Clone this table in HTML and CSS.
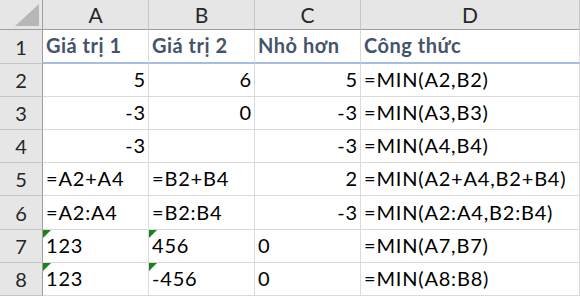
FILE: index.html
```html
<!DOCTYPE html>
<html>
<head>
<meta charset="utf-8">
<link rel="stylesheet" href="styles.css">
</head>
<body>
<div class="sheet">
  <div class="ch corner"><svg class="corner-tri" width="25" height="23" viewBox="0 0 25 23"><polygon points="0,22 24,22 24,0" fill="#b7b7b7"/></svg></div>
  <div class="ch">A</div>
  <div class="ch">B</div>
  <div class="ch">C</div>
  <div class="ch">D</div>

  <div class="rh">1</div>
  <div class="c hd">Giá trị 1</div>
  <div class="c hd">Giá trị 2</div>
  <div class="c hd">Nhỏ hơn</div>
  <div class="c hd">Công thức</div>

  <div class="rh">2</div>
  <div class="c r">5</div>
  <div class="c r">6</div>
  <div class="c r">5</div>
  <div class="c">=MIN(A2,B2)</div>

  <div class="rh">3</div>
  <div class="c r">-3</div>
  <div class="c r">0</div>
  <div class="c r">-3</div>
  <div class="c">=MIN(A3,B3)</div>

  <div class="rh">4</div>
  <div class="c r">-3</div>
  <div class="c r"></div>
  <div class="c r">-3</div>
  <div class="c">=MIN(A4,B4)</div>

  <div class="rh">5</div>
  <div class="c">=A2+A4</div>
  <div class="c">=B2+B4</div>
  <div class="c r">2</div>
  <div class="c">=MIN(A2+A4,B2+B4)</div>

  <div class="rh">6</div>
  <div class="c">=A2:A4</div>
  <div class="c">=B2:B4</div>
  <div class="c r">-3</div>
  <div class="c">=MIN(A2:A4,B2:B4)</div>

  <div class="rh">7</div>
  <div class="c flag">123</div>
  <div class="c flag">456</div>
  <div class="c">0</div>
  <div class="c">=MIN(A7,B7)</div>

  <div class="rh">8</div>
  <div class="c flag">123</div>
  <div class="c flag">-456</div>
  <div class="c">0</div>
  <div class="c">=MIN(A8:B8)</div>
</div>
</body>
</html>
```

FILE: styles.css
```css
html, body {
  margin: 0;
  padding: 0;
  background: #ffffff;
}

.sheet {
  display: grid;
  grid-template-columns: 43px 106px 106px 106px 219px;
  grid-template-rows: 30px 34px 33px 33px 33px 33px 34px 33px 33px;
  width: 580px;
  font-family: Lato, "Liberation Sans", sans-serif;
  font-size: 20px;
  letter-spacing: 0.8px;
  color: #000;
}

.sheet > div {
  box-sizing: border-box;
  display: flex;
  align-items: flex-end;
  padding: 0 2px 5px 3px;
  border-right: 1px solid #dadada;
  border-bottom: 1px solid #dadada;
  white-space: nowrap;
  overflow: visible;
  position: relative;
}

.sheet > .ch {
  background: #e6e6e6;
  justify-content: center;
  align-items: center;
  padding: 0;
  border-right: 1px solid #c6c6c6;
  border-bottom: 1px solid #9e9e9e;
  color: #262626;
  font-size: 21px;
  letter-spacing: 0;
}

.sheet > .corner {
  border-right: 1px solid #9e9e9e;
}

.corner-tri {
  position: absolute;
  left: 15px;
  top: 4px;
}

.sheet > .rh {
  background: #e6e6e6;
  justify-content: center;
  padding: 0 0 4px 0;
  border-right: 1px solid #9e9e9e;
  border-bottom: 1px solid #c6c6c6;
  color: #262626;
  letter-spacing: 0;
}

.sheet > .hd {
  font-weight: bold;
  color: #44546a;
  letter-spacing: 0.5px;
  border-bottom: 2px solid #a6bce2;
}

.sheet > .r {
  justify-content: flex-end;
}

.sheet > .flag::before {
  content: "";
  position: absolute;
  left: 0;
  top: 0;
  width: 0;
  height: 0;
  border-top: 8px solid #1d7f1d;
  border-right: 8px solid transparent;
}
```
